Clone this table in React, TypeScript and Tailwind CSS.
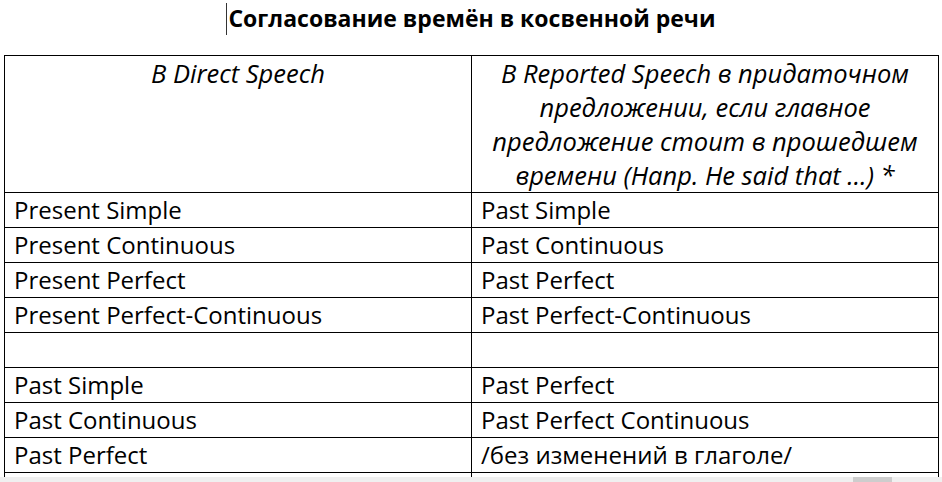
const rows: [string, string][] = [
  ["Present Simple", "Past Simple"],
  ["Present Continuous", "Past Continuous"],
  ["Present Perfect", "Past Perfect"],
  ["Present Perfect-Continuous", "Past Perfect-Continuous"],
  ["\u00a0", "\u00a0"],
  ["Past Simple", "Past Perfect"],
  ["Past Continuous", "Past Perfect Continuous"],
  ["Past Perfect", "/без изменений в глаголе/"],
  ["\u00a0", "\u00a0"],
];

export default function App() {
  return (
    <div className="relative h-[482px] w-[942px] overflow-hidden bg-white font-['Open_Sans',sans-serif] text-black">
      {/* Title with text cursor */}
      <div className="flex h-[55px] w-[942px] items-start justify-center">
        <span className="mt-[3px] h-[32px] w-px bg-[#333]" />
        <h1 className="ml-[1px] text-[23px] font-bold leading-[36px]">
          Согласование времён в косвенной речи
        </h1>
      </div>

      <table className="ml-[4px] w-[934px] table-fixed border-collapse text-[24px] leading-[34px]">
        <colgroup>
          <col className="w-[467px]" />
          <col className="w-[467px]" />
        </colgroup>
        <thead>
          <tr>
            <th className="border border-black px-[6px] py-0 align-top text-[25.5px] font-normal italic">
              В Direct Speech
            </th>
            <th className="border border-black px-[6px] py-0 align-top text-[25.5px] font-normal italic">
              В Reported Speech в придаточном
              <br />
              предложении, если главное
              <br />
              предложение стоит в прошедшем
              <br />
              времени (Напр. He said that …) *
            </th>
          </tr>
        </thead>
        <tbody>
          {rows.map(([direct, reported], i) => (
            <tr key={i}>
              <td className="whitespace-nowrap border border-black px-[9px] py-0">
                {direct}
              </td>
              <td className="whitespace-nowrap border border-black px-[9px] py-0">
                {reported}
              </td>
            </tr>
          ))}
        </tbody>
      </table>

      {/* horizontal scrollbar */}
      <div className="absolute bottom-0 left-0 h-[5px] w-[942px] bg-[#f0f0f0]">
        <div className="ml-[853px] h-[5px] w-[39px] bg-[#cdcdcd]" />
      </div>
    </div>
  );
}
